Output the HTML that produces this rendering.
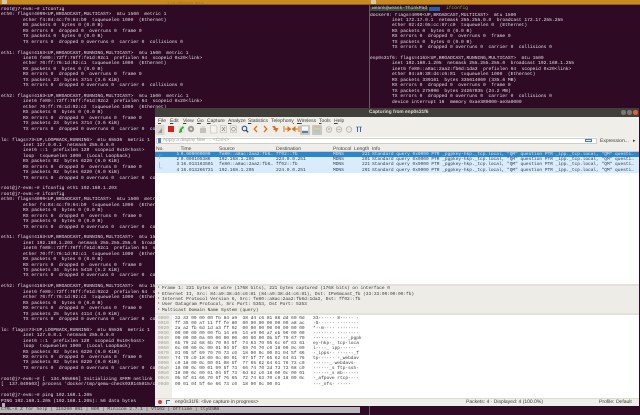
<!DOCTYPE html>
<html><head><meta charset="utf-8"><style>
*{margin:0;padding:0;box-sizing:border-box}
html,body{width:640px;height:415px;overflow:hidden;background:#2e0a25}
body{position:relative;font-family:"Liberation Mono",monospace}
.a{position:absolute}
pre{position:absolute;font:4.6px/5.43px "Liberation Mono",monospace;color:#e2dbe0;white-space:pre;text-rendering:geometricPrecision;overflow:hidden;filter:blur(.3px)}
.t{position:absolute;white-space:pre;text-rendering:geometricPrecision;filter:blur(.3px)}
.m{font:4.5px/5px "Liberation Mono",monospace;color:#3c3c3c}
.s{font:5px/6px "Liberation Sans",sans-serif;color:#3c3b37}
.s u{text-decoration-thickness:.4px;text-underline-offset:.6px}
.r{position:absolute;left:155px;width:484px;height:5.4px}
.r .t{top:0;font:4.5px/5.4px "Liberation Mono",monospace;color:#2e3f50}
.r.sel .t{color:#d5e8f8}
</style></head><body>
<div class="a" style="left:0;top:0;width:640px;height:5px;background:#c98b1f;border-bottom:1px solid #8a5c18"></div>
<div class="a" style="left:2px;top:0;width:5px;height:4px;background:#d9c9a0"></div>
<div class="a" style="left:371px;top:0;width:5px;height:4px;background:#d9c9a0"></div>
<div class="t" style="left:167px;top:0;font:4px/5px 'Liberation Sans',sans-serif;color:#a87418">1:zsh-Minicom  tmux</div>
<div class="a" style="left:368.5px;top:5px;width:1px;height:410px;background:#6d5a68"></div>

<pre style="left:1px;top:7px;width:366px;height:400px">root@j7-evm:~# ifconfig
eth0: flags=4099&lt;UP,BROADCAST,MULTICAST&gt;  mtu 1500  metric 1
        ether f4:84:4c:f9:64:b9  txqueuelen 1000  (Ethernet)
        RX packets 0  bytes 0 (0.0 B)
        RX errors 0  dropped 0  overruns 0  frame 0
        TX packets 0  bytes 0 (0.0 B)
        TX errors 0  dropped 0 overruns 0  carrier 0  collisions 0

eth1: flags=4163&lt;UP,BROADCAST,RUNNING,MULTICAST&gt;  mtu 1500  metric 1
        inet6 fe80::72ff:76ff:fe1d:92c1  prefixlen 64  scopeid 0x20&lt;link&gt;
        ether 70:ff:76:1d:92:c1  txqueuelen 1000  (Ethernet)
        RX packets 0  bytes 0 (0.0 B)
        RX errors 0  dropped 0  overruns 0  frame 0
        TX packets 23  bytes 3714 (3.6 KiB)
        TX errors 0  dropped 0 overruns 0  carrier 0  collisions 0

eth2: flags=4163&lt;UP,BROADCAST,RUNNING,MULTICAST&gt;  mtu 1500  metric 1
        inet6 fe80::72ff:76ff:fe1d:92c2  prefixlen 64  scopeid 0x20&lt;link&gt;
        ether 70:ff:76:1d:92:c2  txqueuelen 1000  (Ethernet)
        RX packets 0  bytes 0 (0.0 B)
        RX errors 0  dropped 0  overruns 0  frame 0
        TX packets 23  bytes 3714 (3.6 KiB)
        TX errors 0  dropped 0 overruns 0  carrier 0  collisions 0

lo: flags=73&lt;UP,LOOPBACK,RUNNING&gt;  mtu 65536  metric 1
        inet 127.0.0.1  netmask 255.0.0.0
        inet6 ::1  prefixlen 128  scopeid 0x10&lt;host&gt;
        loop  txqueuelen 1000  (Local Loopback)
        RX packets 82  bytes 6220 (6.0 KiB)
        RX errors 0  dropped 0  overruns 0  frame 0
        TX packets 82  bytes 6220 (6.0 KiB)
        TX errors 0  dropped 0 overruns 0  carrier 0  collisions 0

root@j7-evm:~# ifconfig eth1 192.168.1.203
root@j7-evm:~# ifconfig
eth0: flags=4099&lt;UP,BROADCAST,MULTICAST&gt;  mtu 1500  metric 1
        ether f4:84:4c:f9:64:b9  txqueuelen 1000  (Ethernet)
        RX packets 0  bytes 0 (0.0 B)
        RX errors 0  dropped 0  overruns 0  frame 0
        TX packets 0  bytes 0 (0.0 B)
        TX errors 0  dropped 0 overruns 0  carrier 0  collisions 0

eth1: flags=4163&lt;UP,BROADCAST,RUNNING,MULTICAST&gt;  mtu 1500  metric 1
        inet 192.168.1.203  netmask 255.255.255.0  broadcast 192.168.1.255
        inet6 fe80::72ff:76ff:fe1d:92c1  prefixlen 64  scopeid 0x20&lt;link&gt;
        ether 70:ff:76:1d:92:c1  txqueuelen 1000  (Ethernet)
        RX packets 0  bytes 0 (0.0 B)
        RX errors 0  dropped 0  overruns 0  frame 0
        TX packets 34  bytes 5418 (5.2 KiB)
        TX errors 0  dropped 0 overruns 0  carrier 0  collisions 0

eth2: flags=4163&lt;UP,BROADCAST,RUNNING,MULTICAST&gt;  mtu 1500  metric 1
        inet6 fe80::72ff:76ff:fe1d:92c2  prefixlen 64  scopeid 0x20&lt;link&gt;
        ether 70:ff:76:1d:92:c2  txqueuelen 1000  (Ethernet)
        RX packets 0  bytes 0 (0.0 B)
        RX errors 0  dropped 0  overruns 0  frame 0
        TX packets 25  bytes 4114 (4.0 KiB)
        TX errors 0  dropped 0 overruns 0  carrier 0  collisions 0

lo: flags=73&lt;UP,LOOPBACK,RUNNING&gt;  mtu 65536  metric 1
        inet 127.0.0.1  netmask 255.0.0.0
        inet6 ::1  prefixlen 128  scopeid 0x10&lt;host&gt;
        loop  txqueuelen 1000  (Local Loopback)
        RX packets 82  bytes 6220 (6.0 KiB)
        RX errors 0  dropped 0  overruns 0  frame 0
        TX packets 82  bytes 6220 (6.0 KiB)
        TX errors 0  dropped 0 overruns 0  carrier 0  collisions 0

root@j7-evm:~# [  134.965666] Initializing XFRM netlink socket
[  137.040503] process 'docker/tmp/qemu-check938145015/check' started with executable stack

root@j7-evm:~# ping 192.168.1.205
PING 192.168.1.205 (192.168.1.205): 56 data bytes</pre>
<div class="a" style="left:2px;top:402.500px;width:3px;height:4.500px;background:#b9b0b5"></div>

<div class="a" style="left:370px;top:6.500px;width:58px;height:4.600px;background:#36493c"></div>
<div class="t" style="left:372px;top:6px;font:4.600px/5.400px 'Liberation Mono',monospace;color:#c8d0c8">weank@weank-ThinkPad</div>
<div class="a" style="left:429px;top:6.500px;width:11px;height:4.600px;background:#2a5ea8"></div>
<div class="t" style="left:446px;top:6px;font:4.600px/5.400px 'Liberation Mono',monospace;color:#7fae3c">ifconfig</div>
<pre style="left:370px;top:12.500px;width:270px;height:95px">docker0: flags=4099&lt;UP,BROADCAST,MULTICAST&gt;  mtu 1500
        inet 172.17.0.1  netmask 255.255.0.0  broadcast 172.17.255.255
        ether 02:42:05:cc:07:c0  txqueuelen 0  (Ethernet)
        RX packets 0  bytes 0 (0.0 B)
        RX errors 0  dropped 0  overruns 0  frame 0
        TX packets 0  bytes 0 (0.0 B)
        TX errors 0  dropped 0 overruns 0  carrier 0  collisions 0

enp0s31f6: flags=4163&lt;UP,BROADCAST,RUNNING,MULTICAST&gt;  mtu 1500
        inet 192.168.1.205  netmask 255.255.255.0  broadcast 192.168.1.255
        inet6 fe80::a8ac:2aa2:fb6d:1da3  prefixlen 64  scopeid 0x20&lt;link&gt;
        ether 84:a9:38:d4:c6:81  txqueuelen 1000  (Ethernet)
        RX packets 339161  bytes 335614069 (335.6 MB)
        RX errors 0  dropped 0  overruns 0  frame 0
        TX packets 275996  bytes 24267835 (24.2 MB)
        TX errors 0  dropped 0 overruns 0  carrier 0  collisions 0
        device interrupt 16  memory 0xae380000-ae3a0000</pre>

<div class="a" style="left:0;top:407px;width:360px;height:5.500px;background:#b9b9b9"></div>
<div class="t" style="left:1px;top:407px;font:4.550px/5.500px 'Liberation Mono',monospace;color:#3a3a3a">CTRL-A Z for help | 115200 8N1 | NOR | Minicom 2.7.1 | VT102 | Offline | ttyUSB0</div>

<!-- Wireshark window -->
<div class="a" style="left:155px;top:108px;width:484px;height:298px;background:#fff"></div>
<div class="a" style="left:155px;top:108px;width:484px;height:9px;background:#413f3a"></div>
<div class="t" style="left:369px;top:109.500px;font:bold 4.800px/6px 'Liberation Sans',sans-serif;color:#dfdbd2">Capturing from enp0s31f6</div>
<div class="a" style="left:621px;top:110px;width:4.500px;height:4.500px;border-radius:50%;background:#7a7870"></div>
<div class="a" style="left:627px;top:110px;width:4.500px;height:4.500px;border-radius:50%;background:#7a7870"></div>
<div class="a" style="left:633px;top:110px;width:4.500px;height:4.500px;border-radius:50%;background:#e0603a"></div>

<div class="a" style="left:155px;top:117px;width:484px;height:20px;background:#f0eee9"></div>
<div class="t s" style="left:158px;top:117.500px"><u>F</u>ile</div>
<div class="t s" style="left:170px;top:117.500px"><u>E</u>dit</div>
<div class="t s" style="left:183px;top:117.500px"><u>V</u>iew</div>
<div class="t s" style="left:197px;top:117.500px"><u>G</u>o</div>
<div class="t s" style="left:207px;top:117.500px"><u>C</u>apture</div>
<div class="t s" style="left:228px;top:117.500px"><u>A</u>nalyze</div>
<div class="t s" style="left:248px;top:117.500px"><u>S</u>tatistics</div>
<div class="t s" style="left:271px;top:117.500px">Telephon<u>y</u></div>
<div class="t s" style="left:297px;top:117.500px"><u>W</u>ireless</div>
<div class="t s" style="left:319px;top:117.500px"><u>T</u>ools</div>
<div class="t s" style="left:334px;top:117.500px"><u>H</u>elp</div>

<svg class="a" style="left:155px;top:124px;filter:blur(.3px)" width="230" height="13" viewBox="155 124 230 13">
<rect x="155.500" y="125" width="9" height="10" rx="1" fill="#d8d6d0"/><path d="M158 133l4-5v5z" fill="#9a9994"/>
<rect x="168" y="126" width="6" height="6" fill="#d81f1f"/>
<rect x="178" y="126" width="6.500" height="7" fill="#e4e4de"/><path d="M179 133l1-4 3-3 1 2-2 1v3z" fill="#36a52a"/>
<circle cx="191" cy="129" r="3.200" fill="#9b9a95"/><circle cx="191" cy="129" r="1.200" fill="#dedcd6"/>
<path d="M200 128h6v5h-6z" fill="#c2c1bc"/><path d="M201 126h4v2h-4z" fill="#dcdbd6"/>
<path d="M210.500 125.500h5l1.500 1.500v6h-6.500z" fill="#f4f3ef" stroke="#bdbcb6" stroke-width=".6"/>
<path d="M220.500 125.500h5l1 1v6h-6z" fill="#f0efea" stroke="#b5b4ae" stroke-width=".6"/><path d="M222 127l3 4m0-4l-3 4" stroke="#8c8b85" stroke-width=".8"/>
<path d="M230.500 125.500h5l1 1v6h-6z" fill="#f0efea" stroke="#b5b4ae" stroke-width=".6"/><circle cx="233.500" cy="129.200" r="1.800" fill="none" stroke="#8c8b85" stroke-width=".7"/>
<circle cx="244.500" cy="128.500" r="2.300" fill="none" stroke="#2a4f8a" stroke-width="1.100"/><path d="M246.200 130.300l2 2" stroke="#27303d" stroke-width="1.100"/>
<path d="M257 126l-2.800 3 2.800 3" fill="none" stroke="#e2711d" stroke-width="1.300"/>
<path d="M264 126l2.800 3-2.800 3" fill="none" stroke="#e2711d" stroke-width="1.300"/>
<path d="M272 126h3l1 2h2.500l-1 2 -1.500 2.500-1-2.500h-2l1-1.500z" fill="#e2711d"/>
<path d="M284 126v6M285 129h4M288 127l2.500 2-2.500 2z" stroke="#e2711d" fill="#e2711d" stroke-width="1"/>
<path d="M299 126v6M298 129h-4M295 127l-2.500 2 2.500 2z" stroke="#e2711d" fill="#e2711d" stroke-width="1"/>
<rect x="300" y="125" width="10" height="10" rx="1" fill="#c9c7c1"/><rect x="302" y="126.500" width="6" height="4" fill="#f7f7f5"/><path d="M302 132h6" stroke="#2a5ea0" stroke-width="1.400"/>
<rect x="312" y="125" width="10" height="10" rx="1" fill="#c9c7c1"/><path d="M314 127h6" stroke="#d9a8a0"/><path d="M314 128.700h6" stroke="#e3d28a"/><path d="M314 130.400h6" stroke="#a9cf9e"/><path d="M314 132h6" stroke="#a9bfd8"/>
<circle cx="329" cy="129.500" r="2.800" fill="#e7e6e1" stroke="#a9a8a2" stroke-width=".6"/><path d="M328 130l1-2 1 2" stroke="#9a9994" stroke-width=".5" fill="none"/>
<circle cx="339" cy="129.500" r="2.800" fill="#e7e6e1" stroke="#a9a8a2" stroke-width=".6"/><path d="M337.500 129.500h3" stroke="#9a9994" stroke-width=".6"/>
<circle cx="349" cy="129.500" r="2.800" fill="#e7e6e1" stroke="#a9a8a2" stroke-width=".6"/>
<path d="M356 127h6" stroke="#7f8ea0" stroke-width=".9"/><path d="M357.500 127v5M360.500 127v5" stroke="#3b6ca8" stroke-width="1"/>
</svg>

<div class="a" style="left:156px;top:137.500px;width:441px;height:6px;background:#fff;border:.5px solid #d0cec8"></div>
<div class="a" style="left:158px;top:138px;width:2.500px;height:5px;background:#4a82c8"></div>
<div class="t" style="left:163px;top:137.500px;font:4.800px/6px 'Liberation Sans',sans-serif;color:#a5a5a5">Apply a display filter … &lt;Ctrl-/&gt;</div>
<div class="a" style="left:585px;top:138.500px;width:6.500px;height:3.500px;border:.8px solid #3d7fc4;background:#e3ecf6"></div>
<div class="a" style="left:155px;top:137px;width:1px;height:7px;background:#f0eee9"></div>
<div class="a" style="left:597px;top:137px;width:42px;height:7px;background:#f0eee9"></div>
<div class="t s" style="left:600px;top:137.500px">Expression...</div>
<div class="t s" style="left:633px;top:137.500px">▸</div>
<div class="a" style="left:155px;top:144px;width:484px;height:2.500px;background:#f0eee9"></div>

<div class="a" style="left:155px;top:146.500px;width:484px;height:5px;background:#efede8;border-bottom:.5px solid #cfcdc7"></div>
<div class="t s" style="left:156px;top:146px;color:#44433f">No.</div>
<div class="t s" style="left:180.500px;top:146px;color:#44433f">Time</div>
<div class="t s" style="left:219px;top:146px;color:#44433f">Source</div>
<div class="t s" style="left:276px;top:146px;color:#44433f">Destination</div>
<div class="t s" style="left:333px;top:146px;color:#44433f">Protocol</div>
<div class="t s" style="left:354px;top:146px;color:#44433f">Length</div>
<div class="t s" style="left:372px;top:146px;color:#44433f">Info</div>

<div class="r sel" style="top:151.600px;background:#2d86c9"><div class="t" style="left:21.500px">1</div><div class="t" style="left:25.800px">0.000000000</div><div class="t" style="left:64px">fe80::a8ac:2aa2:fb6…</div><div class="t" style="left:121px">ff02::fb</div><div class="t" style="left:178px">MDNS</div><div class="t" style="left:207px">221</div><div class="t" style="left:217px">Standard query 0x0000 PTR _pgpkey-hkp._tcp.local, "QM" question PTR _ipp._tcp.local, "QM" questi…</div></div>
<div class="r" style="top:157px;background:#d9ecfb"><div class="t" style="left:21.500px">2</div><div class="t" style="left:25.800px">0.000105386</div><div class="t" style="left:64px">192.168.1.205</div><div class="t" style="left:121px">224.0.0.251</div><div class="t" style="left:178px">MDNS</div><div class="t" style="left:207px">201</div><div class="t" style="left:217px">Standard query 0x0000 PTR _pgpkey-hkp._tcp.local, "QM" question PTR _ipp._tcp.local, "QM" questi…</div></div>
<div class="r" style="top:162.400px;background:#d9ecfb"><div class="t" style="left:21.500px">3</div><div class="t" style="left:25.800px">16.013163501</div><div class="t" style="left:64px">fe80::a8ac:2aa2:fb6…</div><div class="t" style="left:121px">ff02::fb</div><div class="t" style="left:178px">MDNS</div><div class="t" style="left:207px">221</div><div class="t" style="left:217px">Standard query 0x0000 PTR _pgpkey-hkp._tcp.local, "QM" question PTR _ipp._tcp.local, "QM" questi…</div></div>
<div class="r" style="top:167.800px;background:#d9ecfb"><div class="t" style="left:21.500px">4</div><div class="t" style="left:25.800px">16.013266731</div><div class="t" style="left:64px">192.168.1.205</div><div class="t" style="left:121px">224.0.0.251</div><div class="t" style="left:178px">MDNS</div><div class="t" style="left:207px">201</div><div class="t" style="left:217px">Standard query 0x0000 PTR _pgpkey-hkp._tcp.local, "QM" question PTR _ipp._tcp.local, "QM" questi…</div></div>
<svg class="a" style="left:155px;top:151px" width="12" height="24"><path d="M4.500 8V4h3M4.500 11v6h3" fill="none" stroke="#8fa9bf" stroke-width=".6"/></svg>

<div class="a" style="left:155px;top:284px;width:484px;height:31px;background:#eeece7;border-top:2.500px solid #e3e1dc;border-bottom:2.500px solid #e3e1dc"></div>
<pre style="left:162px;top:286.200px;width:476px;height:28px;font-size:4.490px;line-height:5.350px;color:#3a3a3a;overflow:visible">Frame 1: 221 bytes on wire (1768 bits), 221 bytes captured (1768 bits) on interface 0
Ethernet II, Src: 84:a9:38:d4:c6:81 (84:a9:38:d4:c6:81), Dst: IPv6mcast_fb (33:33:00:00:00:fb)
Internet Protocol Version 6, Src: fe80::a8ac:2aa2:fb6d:1da3, Dst: ff02::fb
User Datagram Protocol, Src Port: 5353, Dst Port: 5353
Multicast Domain Name System (query)</pre>
<pre style="left:157.500px;top:286.200px;width:4px;height:28px;font-size:4px;line-height:5.350px;color:#555">▸
▸
▸
▸
▸</pre>

<div class="a" style="left:155px;top:315px;width:17px;height:83px;background:#f0eee9"></div>
<pre style="left:158px;top:315.500px;width:13px;height:72px;font-size:4.500px;line-height:5.080px;color:#9a9a96">0000
0010
0020
0030
0040
0050
0060
0070
0080
0090
00a0
00b0
00c0
00d0</pre>
<pre style="left:175px;top:315.500px;width:135px;height:72px;font-size:4.500px;line-height:5.080px;color:#3d3d3d">33 33 00 00 00 fb 84 a9  38 d4 c6 81 86 dd 60 0d
ff 35 00 a7 11 ff fe 80  00 00 00 00 00 00 a8 ac
2a a2 fb 6d 1d a3 ff 02  00 00 00 00 00 00 00 00
00 00 00 00 00 fb 14 e9  14 e9 00 a7 eb 96 00 00
00 00 00 0a 00 00 00 00  00 00 00 0b 5f 70 67 70
6b 79 2d 68 6b 70 04 5f  74 63 70 05 6c 6f 63 61
6c 00 00 0c 00 01 04 5f  69 70 70 c0 18 00 0c 00
01 05 5f 69 70 70 73 c0  18 00 0c 00 01 04 5f 66
74 70 c0 18 00 0c 00 01  07 5f 77 65 62 64 61 76
c0 18 00 0c 00 01 08 5f  77 65 62 64 61 76 73 c0
18 00 0c 00 01 09 5f 73  66 74 70 2d 73 73 68 c0
18 00 0c 00 01 04 5f 73  6d 62 c0 18 00 0c 00 01
0b 5f 61 66 70 6f 76 65  72 74 63 70 c0 18 00 0c
00 01 04 5f 6e 66 73 c0  18 00 0c 00 01</pre>
<pre style="left:313px;top:315.500px;width:60px;height:72px;font-size:4.500px;line-height:5.080px;color:#3d3d3d">33······ 8·····`·
·5······ ········
*··m···· ········
········ ········
········ ····_pgpk
ey-hkp·_ tcp·loca
l····_ ipp······
·_ipps·· ······_f
tp······ ·_webdav
······_ webdavs·
······_s ftp-ssh·
······_s mb······
·_afpove rtcp····
···_nfs· ·····</pre>

<div class="a" style="left:155px;top:398px;width:484px;height:7.700px;background:#f0eee9;border-top:.7px solid #dcdad5"></div>
<div class="a" style="left:158px;top:400px;width:4px;height:4px;border-radius:50%;background:#d8383a"></div>
<div class="a" style="left:166px;top:400px;width:3.500px;height:3.500px;border-top:.8px solid #3b6ca8;border-left:.8px solid #3b6ca8"></div>
<div class="t s" style="left:175px;top:399px;color:#3a3a36">enp0s31f6: &lt;live capture in progress&gt;</div>
<div class="t s" style="left:466px;top:399px;color:#3a3a36">Packets: 4 · Displayed: 4 (100.0%)</div>
<div class="t s" style="left:599px;top:399px;color:#3a3a36">Profile: Default</div>
</body></html>
